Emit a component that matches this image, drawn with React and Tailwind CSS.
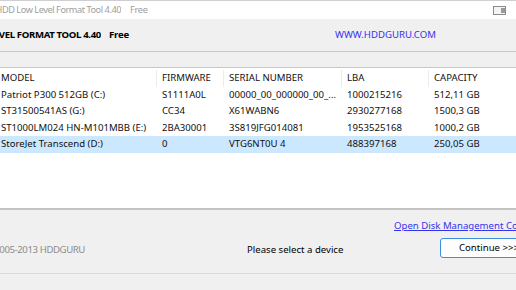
import React from "react";

const rows = [
  ["Patriot P300 512GB (C:)", "S1111A0L", "00000_00_000000_00_...", "1000215216", "512,11 GB"],
  ["ST31500541AS (G:)", "CC34", "X61WABN6", "2930277168", "1500,3 GB"],
  ["ST1000LM024 HN-M101MBB (E:)", "2BA30001", "3S819JFG014081", "1953525168", "1000,2 GB"],
  ["StoreJet Transcend (D:)", "0", "VTG6NT0U 4", "488397168", "250,05 GB"],
];

const cols = ["w-[157px]", "w-[67px]", "w-[118px]", "w-[87px]", "w-[87px]"];

export default function App() {
  return (
    <div
      className="w-[516px] h-[290px] overflow-hidden bg-[#f0f0f0] flex flex-col text-[9.6px] text-black"
      style={{ fontFamily: '"Noto Sans", "Open Sans", sans-serif' }}
    >
      {/* title bar */}
      <div className="h-[19px] shrink-0 bg-white border-t border-[#cfcfcf] flex items-center overflow-hidden">
        <div className="w-[121px] shrink-0 flex justify-end overflow-hidden whitespace-nowrap">
          <span className="text-[#a0a0a0] text-[9.2px] tracking-[-0.45px]">HDD Low Level Format Tool 4.40</span>
        </div>
        <span className="ml-[9px] text-[#a0a0a0] text-[9.2px] tracking-[-0.3px]">Free</span>
        <div className="ml-auto mr-[10px]">
          <svg width="13" height="9" viewBox="0 0 13 9">
            <rect x="0.5" y="0.5" width="12" height="8" fill="#f4f4f4" stroke="#8a8a8a" />
            <rect x="8" y="2" width="4" height="5" fill="#9a9a9a" />
          </svg>
        </div>
      </div>
      {/* header */}
      <div className="h-[33px] shrink-0 flex items-center overflow-hidden border-b border-[#c8c8c8] pt-[1px]">
        <div className="w-[335px] shrink-0 flex items-center whitespace-nowrap">
          <div className="w-[101px] shrink-0 flex justify-end overflow-hidden">
            <span className="font-bold tracking-[-0.35px]">HDD LOW LEVEL FORMAT TOOL 4.40</span>
          </div>
          <span className="ml-[8px] font-bold tracking-[-0.2px]">Free</span>
        </div>
        <span className="text-[#3333ee] whitespace-nowrap">WWW.HDDGURU.COM</span>
      </div>
      <div className="h-[16px] shrink-0 border-b border-[#c8c8c8]"></div>
      {/* list */}
      <div className="h-[140px] shrink-0 bg-white flex flex-col text-[#111]">
        <div className="h-[18px] flex items-center mt-[1px] pt-[1px]">
          {["MODEL", "FIRMWARE", "SERIAL NUMBER", "LBA", "CAPACITY"].map((h, i) => (
            <div key={h} className={`${cols[i]} shrink-0 h-full flex items-center ${i < 4 ? "border-r border-[#ececec]" : ""} ${i > 0 ? "pl-[5px]" : "pl-[1px]"}`}>
              {h}
            </div>
          ))}
        </div>
        {rows.map((r, ri) => (
          <div key={ri} className={`h-[16.4px] flex items-center whitespace-nowrap ${ri === 3 ? "bg-[#cce8ff]" : ""}`}>
            {r.map((c, i) => (
              <div key={i} className={`${cols[i]} shrink-0 overflow-hidden ${i > 0 ? "pl-[5px]" : "pl-[1px]"}`}>
                {c}
              </div>
            ))}
          </div>
        ))}
      </div>
      <div className="h-[2px] shrink-0 bg-[#c4c4c4]"></div>
      {/* bottom */}
      <div className="h-[64px] shrink-0 flex flex-col border-b border-[#dadada]">
        <div className="ml-[394px] mt-[8px] text-[#3333ee] underline whitespace-nowrap h-[16px] leading-[16px]">Open Disk Management Console</div>
        <div className="flex items-center mt-[9px]">
          <div className="w-[247px] shrink-0 flex">
            <div className="w-[85px] shrink-0 flex justify-end overflow-hidden whitespace-nowrap">
              <span className="text-[#8c8c8c] tracking-[-0.4px]">(c) 2005-2013 HDDGURU</span>
            </div>
          </div>
          <span className="w-[193px] shrink-0 whitespace-nowrap">Please select a device</span>
          <button className="h-[20px] w-[110px] shrink-0 border border-[#3b8ee0] rounded-[3px] bg-[#fdfdfd] text-left pl-[18px] mt-[-5px] text-[9.6px]">Continue &gt;&gt;&gt;</button>
        </div>
      </div>
    </div>
  );
}
